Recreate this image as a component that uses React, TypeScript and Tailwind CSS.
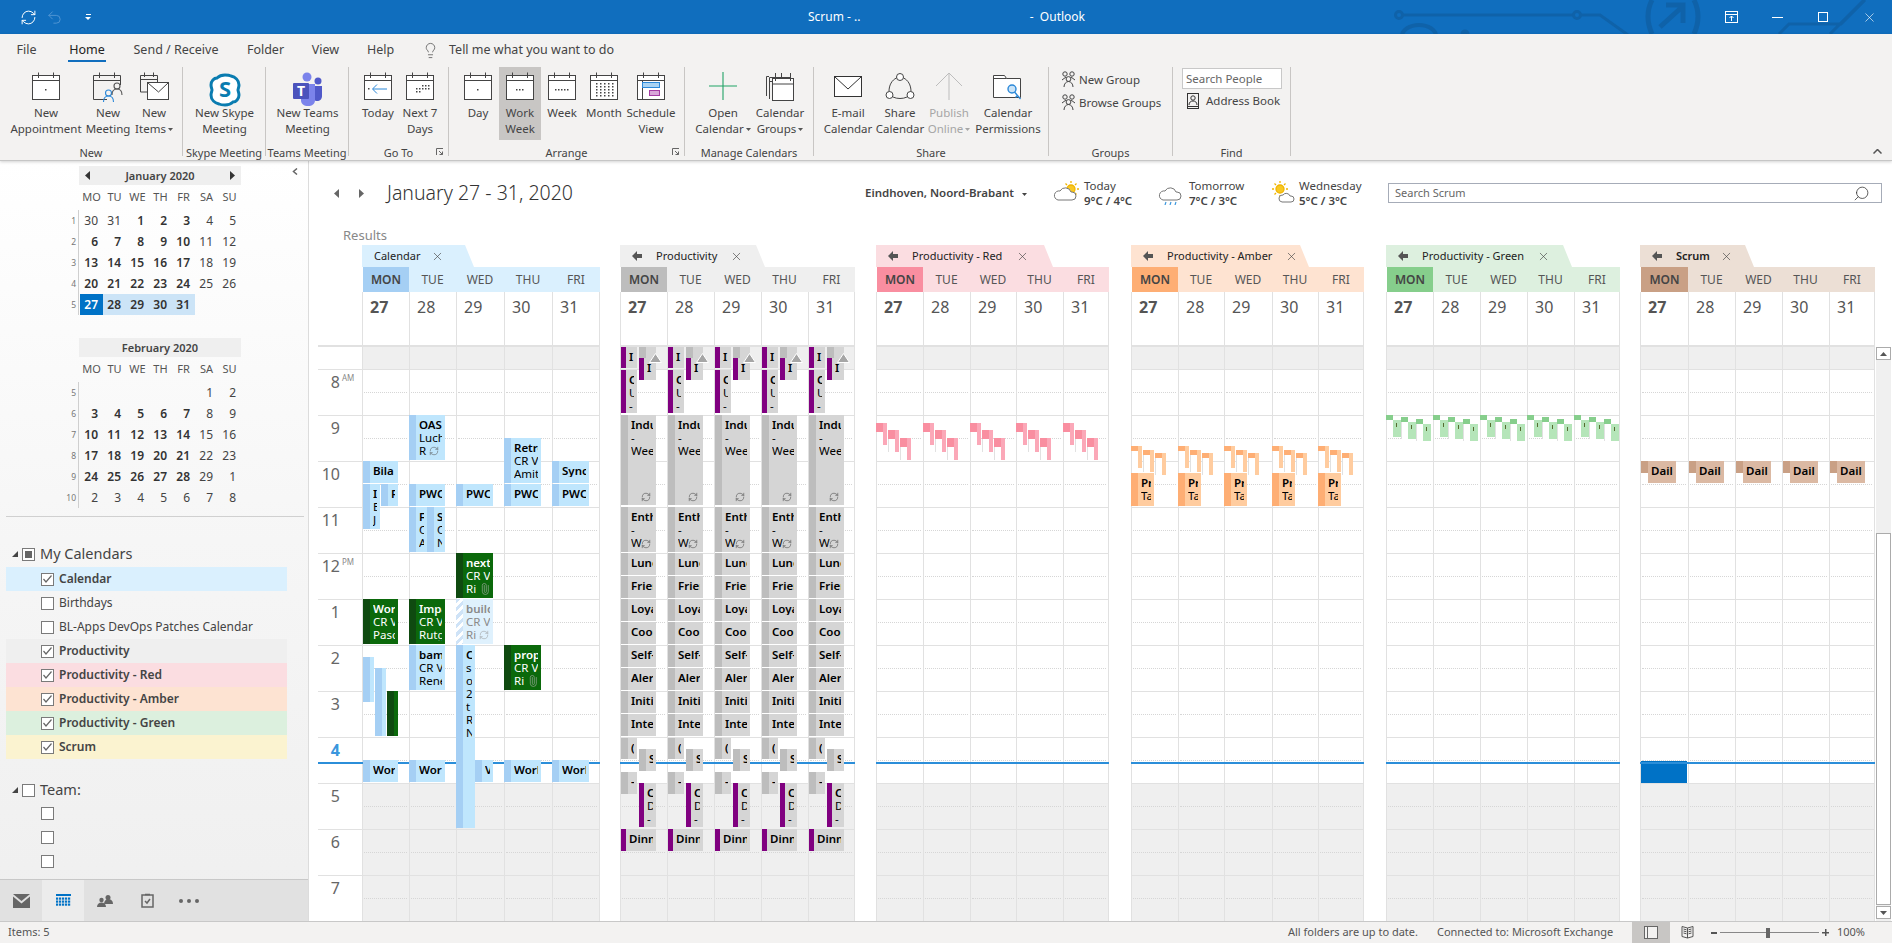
import type { ReactNode } from "react";
import { Paperclip, RefreshCw, Undo2, X, Search, Lightbulb } from "lucide-react";

// ---------- small drawings ----------

function Tri({ className = "fill-[#555]" }: { className?: string }) {
  return (
    <svg width="5" height="3" viewBox="0 0 5 3" className={"inline-block ml-[2px] align-middle " + className}>
      <polygon points="0,0 5,0 2.5,3" />
    </svg>
  );
}

function Cal({ children }: { children?: ReactNode }) {
  return (
    <svg width="28" height="28" viewBox="0 0 28 28" fill="none">
      <rect x="0.5" y="3.5" width="27" height="24" fill="#fff" stroke="#444" />
      <path d="M0 8.5H28M6.5 0.5V6M21.5 0.5V6" stroke="#444" />
      {children}
    </svg>
  );
}

const dots = (pts: number[][], fill = "#444") =>
  pts.map(([x, y]) => <rect key={x + "-" + y} x={x} y={y} width="1.5" height="1.5" fill={fill} />);

function Person({ x, y, color }: { x: number; y: number; color: string }) {
  return (
    <g fill="none" stroke={color} strokeWidth="1.1">
      <circle cx={x} cy={y} r="3" />
      <path d={`M${x - 5} ${y + 9}c0-4 2-6 5-6s5 2 5 6`} />
    </g>
  );
}

function SkypeIcon() {
  return (
    <svg width="34" height="36" viewBox="0 0 34 36">
      <path
        d="M17 3c-4 0-6 1-8 3-3 0-6 3-6 7 0 2 1 4 1 5 0 1-1 3-1 5 0 5 4 8 8 9 2 1 4 1 6 1 4 0 6-1 8-3 3 0 6-3 6-7 0-2-1-4-1-5 0-1 1-3 1-5 0-5-4-8-8-9-2-1-4-1-6-1z"
        fill="#fff"
        stroke="#0a7cb0"
        strokeWidth="3"
      />
      <text x="17" y="25" textAnchor="middle" fontSize="22" fontWeight="700" fill="#0a7cb0" fontFamily="Noto Sans">
        S
      </text>
    </svg>
  );
}

function TeamsIcon() {
  return (
    <svg width="30" height="36" viewBox="0 0 30 36">
      <circle cx="14" cy="5" r="4.5" fill="#7b83eb" />
      <circle cx="25" cy="9" r="3.5" fill="#5059c9" />
      <path d="M8 12h14v16c0 4-3 6-7 6s-7-2-7-6z" fill="#7b83eb" />
      <path d="M22 14h7v10c0 3-2 5-5 5-1 0-2 0-2-1z" fill="#5059c9" />
      <rect x="0" y="11" width="16" height="16" rx="1" fill="#4b53bc" />
      <text x="8" y="24" textAnchor="middle" fontSize="14" fontWeight="700" fill="#fff" fontFamily="Noto Sans">
        T
      </text>
    </svg>
  );
}

function Envelope() {
  return (
    <svg width="28" height="24" viewBox="0 0 28 24" fill="none">
      <rect x="0.5" y="2.5" width="27" height="20" fill="#fff" stroke="#333" />
      <path d="M1 3l13 12L27 3" stroke="#333" />
    </svg>
  );
}

function GroupsGlyph() {
  return (
    <svg width="15" height="17" viewBox="0 0 15 17" fill="none" stroke="#444">
      <circle cx="4" cy="3" r="2.2" />
      <circle cx="11" cy="3" r="2.2" />
      <circle cx="7.5" cy="8" r="2.4" />
      <path d="M1 9l4-3M14 9l-4-3M3 16c0-3 2-5.5 4.5-5.5S12 13 12 16" />
    </svg>
  );
}

function Weather({ kind }: { kind: "sun" | "rain" | "bright" }) {
  return (
    <svg width="28" height="24" viewBox="0 0 28 24" fill="none">
      {kind !== "rain" && (
        <g stroke="#f0b400" strokeWidth="1.3">
          <circle cx={kind === "sun" ? 18 : 12} cy="8" r="4" fill="#f8c822" />
          <path
            d={
              kind === "sun"
                ? "M18 0v2M18 14v2M10 8h2M24 8h2M12.500 2.500l1.500 1.500M23.500 2.500l-1.500 1.500M23.500 13.500l-1.500-1.500"
                : "M12 0v2M12 14v2M4 8h2M18 8h2M6.500 2.500l1.500 1.500M17.500 2.500l-1.500 1.500M6.500 13.500l1.500-1.500"
            }
          />
        </g>
      )}
      <path
        d={
          kind === "bright"
            ? "M14 21h9a3 3 0 000-6h-1a4 4 0 00-7-1 3.500 3.500 0 00-1 7z"
            : "M5 19h14a4 4 0 000-8h-1a6 6 0 00-11-1 4.500 4.500 0 00-2 9z"
        }
        fill="#fff"
        stroke="#777"
      />
      {kind === "rain" && <path d="M8 21l-1 3M13 21l-1 3M18 21l-1 3" stroke="#3a96dd" strokeWidth="1.200" />}
    </svg>
  );
}

function BackArrow() {
  return (
    <svg width="10" height="10" viewBox="0 0 10 10" className="fill-[#555] shrink-0 mr-[14px]">
      <polygon points="0,5 5,0 5,3 10,3 10,7 5,7 5,10" />
    </svg>
  );
}

function Caret({ dir, className = "fill-[#444]" }: { dir: "l" | "r"; className?: string }) {
  return (
    <svg width="5" height="9" viewBox="0 0 5 9" className={className}>
      <polygon points={dir === "l" ? "5,0 5,9 0,4.500" : "0,0 0,9 5,4.500"} />
    </svg>
  );
}

function Check({ on, mixed }: { on?: boolean; mixed?: boolean }) {
  return (
    <span className="flex items-center justify-center shrink-0 bg-white border border-[#7a7a7a] w-[13px] h-[13px]">
      {on && (
        <svg width="9" height="8" viewBox="0 0 9 8" fill="none" stroke="#666" strokeWidth="1.200">
          <path d="M0.500 4l2.500 3L8.500 0.500" />
        </svg>
      )}
      {mixed && <span className="w-[7px] h-[7px] bg-[#666]" />}
    </span>
  );
}

// ---------- title bar ----------

function TitleBar() {
  return (
    <div className="relative h-[34px] shrink-0 bg-[#106ebe] text-white flex items-center overflow-hidden">
      <svg className="absolute left-[1390px] top-0" width="502" height="34" viewBox="0 0 502 34" fill="none" stroke="#0f62a9" strokeWidth="3">
        <circle cx="9" cy="15" r="3.500" />
        <path d="M13 15H183" />
        <circle cx="187" cy="15" r="3.500" />
        <path d="M191 15h19l28 20" />
        <path d="M12 36a17 11 0 0 1 34 0" strokeWidth="4" />
        <circle cx="75" cy="34" r="3" fill="#0f62a9" />
        <path d="M262 0q-8 16 0 34M304 0q8 16 0 34" strokeWidth="5" />
        <path d="M270 27l22-20M276 5h17v18" strokeWidth="5" />
        <path d="M389 34l10-10h52l24-24M440 34l34-34" />
      </svg>
      <div className="relative flex items-center pl-[20px]">
        <RefreshCw size={17} strokeWidth={1.4} />
        <Undo2 size={17} strokeWidth={1.4} className="ml-[9px] text-[#4f94d2]" />
        <span className="ml-[22px] flex flex-col items-center gap-[2px]">
          <span className="w-[5px] h-[1px] bg-white" />
          <svg width="6" height="3" viewBox="0 0 6 3" className="fill-white">
            <polygon points="0,0 6,0 3,3" />
          </svg>
        </span>
      </div>
      <div className="relative ml-[717px] w-[277px] flex justify-between text-[12px]">
        <span>Scrum - ..</span>
        <span>-&nbsp; Outlook</span>
      </div>
      <div className="relative ml-auto flex items-center">
        <span className="w-[46px] flex justify-center">
          <svg width="13" height="12" viewBox="0 0 13 12" fill="none" stroke="#fff">
            <rect x="0.500" y="0.500" width="12" height="11" />
            <path d="M0 3.500h13M6.500 10V5M4.500 7l2-2 2 2" />
          </svg>
        </span>
        <span className="w-[46px] flex justify-center">
          <span className="w-[11px] h-[1px] bg-white" />
        </span>
        <span className="w-[46px] flex justify-center">
          <span className="w-[10px] h-[10px] border border-white" />
        </span>
        <span className="w-[46px] flex justify-center">
          <X size={15} strokeWidth={1} />
        </span>
      </div>
    </div>
  );
}

// ---------- ribbon ----------

function RibbonButton({
  w,
  icon,
  lines,
  arrow,
  active,
  muted,
}: {
  w: string;
  icon: ReactNode;
  lines: string[];
  arrow?: boolean;
  active?: boolean;
  muted?: boolean;
}) {
  return (
    <div className={"h-[73px] shrink-0 flex flex-col items-center " + w + (active ? " bg-[#c8c6c4]" : "") + (muted ? " text-[#a6a6a6]" : "")}>
      <div className="h-[38px] pt-[5px] flex justify-center items-start">{icon}</div>
      {lines.map((l, i) => (
        <div key={l} className="h-[16px] leading-[16px] whitespace-nowrap">
          {l}
          {arrow && i === lines.length - 1 && <Tri className={muted ? "fill-[#a6a6a6]" : "fill-[#555]"} />}
        </div>
      ))}
    </div>
  );
}

function RibbonGroup({
  w,
  label,
  launcher,
  pad = "",
  children,
}: {
  w: string;
  label: string;
  launcher?: boolean;
  pad?: string;
  children: ReactNode;
}) {
  return (
    <div className={"relative h-[89px] border-r border-[#c8c6c4] shrink-0 " + w}>
      <div className={"flex h-[73px] " + pad}>{children}</div>
      <div className="mt-[5px] h-[16px] leading-[16px] text-[11px] text-center whitespace-nowrap">{label}</div>
      {launcher && (
        <svg width="7" height="7" viewBox="0 0 7 7" fill="none" stroke="#666" className="absolute right-[5px] bottom-[1px]">
          <path d="M0.500 7V0.500H7M3 3l3.500 3.500M6.500 3.500v3h-3" />
        </svg>
      )}
    </div>
  );
}

const TABS = [
  ["File", "w-[53px]"],
  ["Home", "w-[68px]"],
  ["Send / Receive", "w-[110px]"],
  ["Folder", "w-[69px]"],
  ["View", "w-[51px]"],
  ["Help", "w-[59px]"],
];

function Ribbon() {
  return (
    <div className="relative z-10 h-[127px] shrink-0 bg-[#f3f2f1] border-b border-[#c6c6c6] shadow-[0_1px_3px_rgba(0,0,0,0.18)] text-[11.500px] text-[#444]">
      <div className="flex h-[28px] items-center pt-[4px] text-[12.500px]">
        {TABS.map(([t, w]) => (
          <div key={t} className={"relative h-full flex items-center justify-center " + w}>
            <span className={t === "Home" ? "text-[#222]" : ""}>{t}</span>
            {t === "Home" && <span className="absolute bottom-0 left-[15px] w-[38px] h-[2px] bg-[#106ebe]" />}
          </div>
        ))}
        <Lightbulb size={17} strokeWidth={1.1} className="ml-[12px] text-[#555]" />
        <span className="ml-[10px]">Tell me what you want to do</span>
      </div>
      <div className="flex mt-[5px]">
        <RibbonGroup w="w-[183px]" label="New" pad="pl-[7px]">
          <RibbonButton w="w-[78px]" icon={<Cal>{dots([[13, 17]])}</Cal>} lines={["New", "Appointment"]} />
          <RibbonButton
            w="w-[46px]"
            icon={
              <svg width="30" height="30" viewBox="0 0 30 30" fill="none">
                <path d="M14 27.500H0.500V3.500h27V13M0 8.500h28M6.500 0.500V6M21.500 0.500V6" stroke="#444" />
                <Person x={15.500} y={21} color="#2b88d8" />
                <Person x={24} y={14} color="#555" />
              </svg>
            }
            lines={["New", "Meeting"]}
          />
          <RibbonButton
            w="w-[46px]"
            icon={
              <svg width="29" height="30" viewBox="0 0 29 30" fill="none" stroke="#444">
                <path d="M7 20H0.500V3.500h17V10M0 7.500h18M4.500 0.500V5M13.500 0.500V5" />
                <rect x="7.500" y="10.500" width="21" height="17" fill="#fff" />
                <path d="M8 11l10.500 9L28 11" />
              </svg>
            }
            lines={["New", "Items"]}
            arrow
          />
        </RibbonGroup>
        <RibbonGroup w="w-[83px]" label="Skype Meeting">
          <RibbonButton w="w-[83px]" icon={<SkypeIcon />} lines={["New Skype", "Meeting"]} />
        </RibbonGroup>
        <RibbonGroup w="w-[83px]" label="Teams Meeting">
          <RibbonButton w="w-[83px]" icon={<TeamsIcon />} lines={["New Teams", "Meeting"]} />
        </RibbonGroup>
        <RibbonGroup w="w-[100px]" label="Go To" pad="pl-[8px]" launcher>
          <RibbonButton
            w="w-[42px]"
            icon={
              <Cal>
                <path d="M23 17H9M13 12.500L8.500 17l4.500 4.500" stroke="#2b88d8" />
                <rect x="4" y="16" width="1.500" height="1.500" fill="#444" />
              </Cal>
            }
            lines={["Today"]}
          />
          <RibbonButton
            w="w-[42px]"
            icon={<Cal>{dots([[16, 13], [19, 13], [22, 13], [10, 16], [13, 16], [16, 16], [19, 16], [22, 16], [10, 19], [13, 19]])}</Cal>}
            lines={["Next 7", "Days"]}
          />
        </RibbonGroup>
        <RibbonGroup w="w-[236px]" label="Arrange" pad="pl-[8px]" launcher>
          <RibbonButton w="w-[42px]" icon={<Cal>{dots([[13, 17]])}</Cal>} lines={["Day"]} />
          <RibbonButton active w="w-[42px]" icon={<Cal>{dots([[10, 17], [13, 17], [16, 17]])}</Cal>} lines={["Work", "Week"]} />
          <RibbonButton w="w-[42px]" icon={<Cal>{dots([[7, 17], [10, 17], [13, 17], [16, 17], [19, 17]])}</Cal>} lines={["Week"]} />
          <RibbonButton
            w="w-[42px]"
            icon={
              <Cal>
                {dots(
                  [11, 14, 17, 20, 23].flatMap((y) => [6, 10, 14, 18, 22].map((x) => [x, y]))
                )}
              </Cal>
            }
            lines={["Month"]}
          />
          <RibbonButton
            w="w-[52px]"
            icon={
              <Cal>
                <path d="M5.500 8.500V27.500" stroke="#444" />
                <rect x="5.500" y="10.500" width="17" height="5" fill="#a9d3f2" stroke="#2b88d8" />
                <rect x="12.500" y="18.500" width="10" height="5" fill="#d8a6d8" stroke="#a33ba3" />
              </Cal>
            }
            lines={["Schedule", "View"]}
          />
        </RibbonGroup>
        <RibbonGroup w="w-[129px]" label="Manage Calendars" pad="pl-[11px]">
          <RibbonButton
            w="w-[54px]"
            icon={
              <svg width="28" height="28" viewBox="0 0 28 28" stroke="#21a366" strokeWidth="1.100">
                <path d="M14 0V28M0 14H28" />
              </svg>
            }
            lines={["Open", "Calendar"]}
            arrow
          />
          <RibbonButton
            w="w-[60px]"
            icon={
              <svg width="28" height="29" viewBox="0 0 28 29" fill="none" stroke="#444">
                <path d="M0.500 24V4.500H3M3.500 27V5.500h21M3 9.500h3" />
                <rect x="6.500" y="6.500" width="21" height="22" fill="#fff" />
                <path d="M6 12h22M9.500 1v8M15.500 1v6M24.500 1v8" />
              </svg>
            }
            lines={["Calendar", "Groups"]}
            arrow
          />
        </RibbonGroup>
        <RibbonGroup w="w-[235px]" label="Share" pad="pl-[8px]">
          <RibbonButton w="w-[52px]" icon={<div className="pt-[2px]"><Envelope /></div>} lines={["E-mail", "Calendar"]} />
          <RibbonButton
            w="w-[52px]"
            icon={
              <svg width="30" height="30" viewBox="0 0 30 30" fill="none" stroke="#444">
                <circle cx="15" cy="5" r="3.500" fill="#fff" />
                <circle cx="4.500" cy="23" r="3.500" fill="#fff" />
                <circle cx="25.500" cy="23" r="3.500" fill="#fff" />
                <path d="M11.500 6C7 8 4 13 4 19.500M18.500 6c4.500 2 7.500 7 7.500 13.500M8 25c4 2 10 2 14 0" />
              </svg>
            }
            lines={["Share", "Calendar"]}
          />
          <RibbonButton
            muted
            w="w-[46px]"
            icon={
              <svg width="28" height="29" viewBox="0 0 28 29" fill="none" stroke="#bdbdbd">
                <path d="M14 28V1M1 14L14 1l13 13" />
              </svg>
            }
            lines={["Publish", "Online"]}
            arrow
          />
          <RibbonButton
            w="w-[72px]"
            icon={
              <svg width="30" height="30" viewBox="0 0 30 30" fill="none">
                <path d="M0.500 25.500V3.500h11l2 3h14v19z" fill="#fff" stroke="#444" />
                <path d="M0.500 6.500h13" stroke="#444" />
                <circle cx="19" cy="17" r="4" stroke="#2b88d8" strokeWidth="1.400" fill="#cbe4f7" />
                <path d="M21.500 20l6 7M24.500 23.500l-2 2" stroke="#2b88d8" strokeWidth="1.400" />
              </svg>
            }
            lines={["Calendar", "Permissions"]}
          />
        </RibbonGroup>
        <RibbonGroup w="w-[124px]" label="Groups">
          <div className="pl-[12px] pt-[1px]">
            <div className="h-[23px] flex items-center gap-[3px] whitespace-nowrap">
              <GroupsGlyph />
              <span>New Group</span>
            </div>
            <div className="h-[23px] flex items-center gap-[3px] whitespace-nowrap">
              <GroupsGlyph />
              <span>Browse Groups</span>
            </div>
          </div>
        </RibbonGroup>
        <RibbonGroup w="w-[118px]" label="Find">
          <div className="pl-[9px] pt-[1px]">
            <div className="w-[100px] h-[21px] leading-[19px] border border-[#c8c8c8] bg-white pl-[3px] text-[#666] whitespace-nowrap">
              Search People
            </div>
            <div className="mt-[2px] h-[20px] flex items-center gap-[7px] pl-[5px] whitespace-nowrap">
              <svg width="12" height="16" viewBox="0 0 12 16" fill="none" stroke="#333">
                <rect x="0.500" y="0.500" width="11" height="15" />
                <circle cx="6" cy="5" r="2.200" />
                <path d="M2 12c0-3 2-4 4-4s4 1 4 4M0 13.500h12" />
              </svg>
              <span>Address Book</span>
            </div>
          </div>
        </RibbonGroup>
      </div>
      <svg width="9" height="5" viewBox="0 0 9 5" fill="none" stroke="#555" strokeWidth="1.500" className="absolute left-[1873px] top-[115px]">
        <path d="M0.500 4.500l4-4 4 4" />
      </svg>
    </div>
  );
}

// ---------- sidebar ----------

const WEEKDAYS = ["MO", "TU", "WE", "TH", "FR", "SA", "SU"];

// negative numbers are days that fall in another month, 0 is an empty cell
const JAN = [
  [1, [-30, -31, 1, 2, 3, 4, 5]],
  [2, [6, 7, 8, 9, 10, 11, 12]],
  [3, [13, 14, 15, 16, 17, 18, 19]],
  [4, [20, 21, 22, 23, 24, 25, 26]],
  [5, [27, 28, 29, 30, 31, 0, 0]],
] as [number, number[]][];

const FEB = [
  [5, [0, 0, 0, 0, 0, 1, 2]],
  [6, [3, 4, 5, 6, 7, 8, 9]],
  [7, [10, 11, 12, 13, 14, 15, 16]],
  [8, [17, 18, 19, 20, 21, 22, 23]],
  [9, [24, 25, 26, 27, 28, 29, -1]],
  [10, [-2, -3, -4, -5, -6, -7, -8]],
] as [number, number[]][];

function MiniMonth({ title, rows, arrows, selected }: { title: string; rows: [number, number[]][]; arrows?: boolean; selected?: boolean }) {
  return (
    <div className="text-[12px] text-[#444]">
      <div className="ml-[79px] w-[162px] h-[19px] bg-[#efefef] flex items-center justify-between px-[6px]">
        <span>{arrows && <Caret dir="l" className="fill-[#333]" />}</span>
        <span className="text-[11px] font-semibold leading-none">{title}</span>
        <span>{arrows && <Caret dir="r" className="fill-[#333]" />}</span>
      </div>
      <div className="ml-[80px] h-[25px] flex items-center">
        {WEEKDAYS.map((d) => (
          <span key={d} className="w-[23px] text-center text-[11px] text-[#555]">
            {d}
          </span>
        ))}
      </div>
      {rows.map(([wk, days], r) => (
        <div key={wk} className="flex h-[21px]">
          <span className="ml-[59px] w-[20px] pr-[2px] text-right text-[8.500px] leading-[21px] text-[#777] border-r border-[#cfcfcf]">{wk}</span>
          <span className="w-[1px]" />
          {days.map((n, i) => {
            const isToday = selected && r === 4 && i === 0;
            const inWeek = selected && r === 4 && i < 5;
            return (
              <span
                key={i}
                className={
                  "w-[23px] pr-[5px] text-right leading-[21px] " +
                  (n > 0 && i < 5 ? "font-semibold text-[#333] " : "") +
                  (isToday ? "bg-[#0072c6] text-white " : inWeek ? "bg-[#cce4f7] " : "")
                }
              >
                {n === 0 ? "" : Math.abs(n)}
              </span>
            );
          })}
        </div>
      ))}
    </div>
  );
}

const CALENDARS = [
  { name: "Calendar", bg: "bg-[#daf0fe]", on: true },
  { name: "Birthdays", bg: "" },
  { name: "BL-Apps DevOps Patches Calendar", bg: "" },
  { name: "Productivity", bg: "bg-[#efefef]", on: true },
  { name: "Productivity - Red", bg: "bg-[#fbdde1]", on: true },
  { name: "Productivity - Amber", bg: "bg-[#fde3d2]", on: true },
  { name: "Productivity - Green", bg: "bg-[#dcf0de]", on: true },
  { name: "Scrum", bg: "bg-[#fbf3d0]", on: true },
];

function Heading({ label, mixed }: { label: string; mixed?: boolean }) {
  return (
    <div className="h-[24px] flex items-center pl-[12px] text-[14.500px] text-[#444]">
      <svg width="6" height="6" viewBox="0 0 6 6" className="fill-[#444] mr-[4px]">
        <polygon points="6,0 6,6 0,6" />
      </svg>
      <Check mixed={mixed} />
      <span className="ml-[5px]">{label}</span>
    </div>
  );
}

function NavBar() {
  return (
    <div className="mt-auto h-[42px] shrink-0 bg-[#e1e1e1] border-t border-[#c8c8c8] flex">
      <div className="w-[42px] flex items-center justify-center">
        <svg width="17" height="14" viewBox="0 0 17 14" fill="#666">
          <polygon points="0,0 17,0 8.500,7" />
          <polygon points="0,2.500 8.500,9.500 17,2.500 17,14 0,14" />
        </svg>
      </div>
      <div className="w-[42px] bg-[#ececec] flex items-center justify-center">
        <svg width="15" height="13" viewBox="0 0 15 13" fill="#0072c6">
          <rect width="15" height="2" />
          {[3, 6, 9].flatMap((y) =>
            [0, 3, 6, 9, 12].map((x) => <rect key={x + "-" + y} x={x} y={y + 0.5} width="2.200" height="2.200" />)
          )}
        </svg>
      </div>
      <div className="w-[42px] flex items-center justify-center">
        <svg width="16" height="12" viewBox="0 0 16 12" fill="#666">
          <circle cx="11" cy="2.500" r="2.500" />
          <path d="M7 9c0-3 2-5 4-5s5 1 5 5z" />
          <circle cx="4.500" cy="5" r="2.200" />
          <path d="M0 12c0-3 2-4.500 4.500-4.500S9 9 9 12z" />
        </svg>
      </div>
      <div className="w-[42px] flex items-center justify-center">
        <svg width="13" height="15" viewBox="0 0 13 15" fill="none" stroke="#666" strokeWidth="1.500">
          <rect x="1" y="2" width="11" height="12" />
          <path d="M4 1.500h5M4 8l2 2 3-4" />
        </svg>
      </div>
      <div className="w-[42px] flex items-center justify-center gap-[4px]">
        <span className="w-[4px] h-[4px] rounded-full bg-[#666]" />
        <span className="w-[4px] h-[4px] rounded-full bg-[#666]" />
        <span className="w-[4px] h-[4px] rounded-full bg-[#666]" />
      </div>
    </div>
  );
}

function Sidebar() {
  return (
    <aside className="relative w-[309px] shrink-0 h-full flex flex-col border-r border-[#dcdcdc] bg-gradient-to-b from-white via-[#f6f6f6] to-[#efefef]">
      <div className="absolute left-[292px] top-[7px]">
        <svg width="6" height="7" viewBox="0 0 6 7" fill="none" stroke="#666" strokeWidth="1.500">
          <path d="M5 0.500L1.500 3.500 5 6.500" />
        </svg>
      </div>
      <div className="pt-[5px]">
        <MiniMonth title="January 2020" rows={JAN} arrows selected />
      </div>
      <div className="mt-[23px]">
        <MiniMonth title="February 2020" rows={FEB} />
      </div>
      <div className="mt-[8px] ml-[6px] w-[298px] h-[1px] bg-[#d0d0d0]" />
      <div className="mt-[25px]">
        <Heading label="My Calendars" mixed />
      </div>
      <div className="mt-[1px]">
        {CALENDARS.map((c) => (
          <div key={c.name} className={"ml-[6px] w-[281px] h-[24px] flex items-center pl-[35px] text-[12px] text-[#444] " + c.bg}>
            <Check on={c.on} />
            <span className={"ml-[5px] " + (c.on ? "font-semibold" : "")}>{c.name}</span>
          </div>
        ))}
      </div>
      <div className="mt-[19px]">
        <Heading label="Team:" />
      </div>
      <div className="-mt-[1px]">
        {[0, 1, 2].map((i) => (
          <div key={i} className="h-[24px] flex items-center pl-[41px]">
            <Check />
          </div>
        ))}
      </div>
      <NavBar />
    </aside>
  );
}

// ---------- calendar events ----------

type Ev = {
  x: number;
  w: number;
  t: number;
  b: number;
  k: string;
  lines?: string[];
  ic?: "sync" | "clip" | "off";
  corner?: boolean;
  flat?: boolean; // stripe only covers the top of the box, as in the Scrum dailies
};

const KINDS: Record<string, { bg: string; stripe: string; text: string }> = {
  blue: { bg: "bg-[#bfe6fd]", stripe: "bg-[#a5cff4]", text: "text-black" },
  green: { bg: "bg-[#0b690b]", stripe: "bg-[#0f4a10]", text: "text-white" },
  tent: {
    bg: "bg-[#dff1fd]",
    stripe: "bg-[repeating-linear-gradient(135deg,#cfe3f7_0,#cfe3f7_3px,#fff_3px,#fff_6px)]",
    text: "text-[#8a8a8a]",
  },
  gray: { bg: "bg-[#d5d5d5]", stripe: "bg-[#bdbdbd]", text: "text-black" },
  purple: { bg: "bg-[#d5d5d5]", stripe: "bg-[#800080]", text: "text-black" },
  amber: { bg: "bg-[#ffcc9f]", stripe: "bg-[#feae74]", text: "text-black" },
  scrum: { bg: "bg-[#dbb9a3]", stripe: "bg-[#c9a085]", text: "text-black" },
};

function EventBox({ e }: { e: Ev }) {
  const k = KINDS[e.k];
  const thin = e.k === "purple";
  return (
    <div
      className={"absolute flex overflow-hidden " + (e.flat ? "" : k.bg + " ") + k.text}
      style={{ left: e.x, top: e.t - 369, width: e.w, height: e.b - e.t }}
    >
      {e.flat ? (
        <div className="w-[7px] shrink-0 bg-white">
          <div className={"h-[12px] " + k.stripe} />
        </div>
      ) : (
        <div className={"shrink-0 " + (thin ? "w-[5px] " : "w-[7px] ") + k.stripe} />
      )}
      <div className={"min-w-0 flex-1 overflow-hidden whitespace-nowrap pl-[3px] pt-[3px] text-[11.500px] leading-[13px] " + (e.flat ? k.bg : "")}>
        <div className="overflow-hidden mr-[3px]">
          {(e.lines || []).map((l, i) => (
            <div key={i} className={"h-[13px] flex items-center " + (i === 0 ? "font-semibold" : "")}>
              {l}
              {e.ic && !e.corner && i === (e.lines || []).length - 1 && (
                <span className="ml-[3px] shrink-0">
                  {e.ic === "sync" && <RefreshCw size={10} strokeWidth={1.300} className="text-[#555]" />}
                  {e.ic === "clip" && <Paperclip size={12} strokeWidth={1.300} className="text-[#9aa89a] -rotate-45" />}
                  {e.ic === "off" && <RefreshCw size={10} strokeWidth={1.300} className="text-[#9a9a9a]" />}
                </span>
              )}
            </div>
          ))}
        </div>
      </div>
      {e.corner && <RefreshCw size={10} strokeWidth={1.300} className="absolute right-[5px] bottom-[3px] text-[#444]" />}
    </div>
  );
}

function Sliver({
  x,
  t,
  b,
  dark,
  light,
  top,
  w = 11,
  tick,
  lightTop = "",
}: {
  x: number;
  t: number;
  b: number;
  dark: string;
  light: string;
  top: string;
  w?: number;
  tick?: boolean;
  lightTop?: string;
}) {
  return (
    <div className="absolute flex" style={{ left: x, top: t - 369, width: w, height: b - t }}>
      <div className="w-[7px] flex flex-col">
        <div className={top + " " + dark} />
        <div className="flex-1 border-l border-[#e1e1e1] bg-white" />
      </div>
      <div className={"flex-1 " + lightTop + " " + light}>{tick && <div className="mt-[3px] ml-[3px] w-[1px] h-[4px] bg-[#556b2f]" />}</div>
    </div>
  );
}

// the five Productivity days all hold the same events
const PROD_EVENTS: Ev[] = [
  { x: 1, w: 16, t: 347, b: 368, k: "purple", lines: ["I"] },
  { x: 19, w: 17, t: 347, b: 358, k: "gray" },
  { x: 19, w: 17, t: 358, b: 380, k: "purple", lines: ["I"] },
  { x: 1, w: 16, t: 370, b: 413, k: "purple", lines: ["C", "U", "-"] },
  { x: 1, w: 35, t: 415, b: 505, k: "gray", lines: ["Indu", "-", "Weekly"], corner: true, ic: "sync" },
  { x: 1, w: 35, t: 507, b: 552, k: "gray", lines: ["Enth", "-", "W"], corner: true, ic: "sync" },
  { x: 1, w: 35, t: 553, b: 575, k: "gray", lines: ["Lunch"] },
  { x: 1, w: 35, t: 576, b: 598, k: "gray", lines: ["Friends"] },
  { x: 1, w: 35, t: 599, b: 621, k: "gray", lines: ["Loyalty"] },
  { x: 1, w: 35, t: 622, b: 644, k: "gray", lines: ["Coop"] },
  { x: 1, w: 35, t: 645, b: 667, k: "gray", lines: ["Self-"] },
  { x: 1, w: 35, t: 668, b: 690, k: "gray", lines: ["Alert"] },
  { x: 1, w: 35, t: 691, b: 713, k: "gray", lines: ["Initial"] },
  { x: 1, w: 35, t: 714, b: 736, k: "gray", lines: ["Inter"] },
  { x: 1, w: 16, t: 738, b: 759, k: "gray", lines: ["("] },
  { x: 19, w: 17, t: 749, b: 771, k: "gray", lines: ["S"] },
  { x: 1, w: 16, t: 772, b: 794, k: "gray", lines: ["-"] },
  { x: 19, w: 17, t: 783, b: 827, k: "purple", lines: ["C", "D", "-"] },
  { x: 1, w: 35, t: 829, b: 851, k: "purple", lines: ["Dinner"] },
];

const WORK_BOTTOM: Ev = { x: 0, w: 36, t: 760, b: 782, k: "blue", lines: ["Work"] };

const CALENDAR_EVENTS: Ev[][] = [
  [
    { x: 1, w: 35, t: 461, b: 483, k: "blue", lines: ["Bila"] },
    { x: 1, w: 17, t: 484, b: 529, k: "blue", lines: ["I", "E", "J"] },
    { x: 19, w: 17, t: 484, b: 506, k: "blue", lines: ["F"] },
    { x: 1, w: 11, t: 657, b: 702, k: "blue" },
    { x: 13, w: 11, t: 668, b: 736, k: "blue" },
    { x: 25, w: 11, t: 691, b: 736, k: "green" },
    { x: 1, w: 35, t: 599, b: 644, k: "green", lines: ["Work", "CR V", "Pasc"] },
    { ...WORK_BOTTOM, x: 1, w: 35 },
  ],
  [
    { x: 0, w: 36, t: 415, b: 460, k: "blue", lines: ["OAS", "Luch", "R"], ic: "sync" },
    { x: 0, w: 36, t: 484, b: 506, k: "blue", lines: ["PWC"] },
    { x: 0, w: 18, t: 507, b: 552, k: "blue", lines: ["F", "C", "A"] },
    { x: 18, w: 18, t: 507, b: 552, k: "blue", lines: ["S", "C", "N"] },
    { x: 0, w: 36, t: 599, b: 644, k: "green", lines: ["Impa", "CR V", "Rutg"] },
    { x: 0, w: 36, t: 645, b: 690, k: "blue", lines: ["bam", "CR V", "Rene"] },
    WORK_BOTTOM,
  ],
  [
    { x: 0, w: 37, t: 484, b: 506, k: "blue", lines: ["PWC"] },
    { x: 0, w: 37, t: 553, b: 598, k: "green", lines: ["next", "CR V", "Ri"], ic: "clip" },
    { x: 0, w: 37, t: 599, b: 644, k: "tent", lines: ["build", "CR V", "Ri"], ic: "off" },
    { x: 0, w: 19, t: 645, b: 828, k: "blue", lines: ["C", "s", "o", "2", "t", "R", "N"] },
    { x: 19, w: 18, t: 760, b: 782, k: "blue", lines: ["V"] },
  ],
  [
    { x: 0, w: 37, t: 438, b: 483, k: "blue", lines: ["Retro", "CR V", "Amit"] },
    { x: 0, w: 37, t: 484, b: 506, k: "blue", lines: ["PWC"] },
    { x: 0, w: 37, t: 645, b: 690, k: "green", lines: ["prop", "CR V", "Ri"], ic: "clip" },
    { ...WORK_BOTTOM, w: 37 },
  ],
  [
    { x: 0, w: 37, t: 461, b: 483, k: "blue", lines: ["Sync"] },
    { x: 0, w: 37, t: 484, b: 506, k: "blue", lines: ["PWC"] },
    { ...WORK_BOTTOM, w: 37 },
  ],
];

function ProdExtras() {
  return (
    <svg width="13" height="10" viewBox="0 0 13 10" className="absolute left-[29px] -top-[16px]">
      <polygon points="6.500,0.500 12.500,9.500 0.500,9.500" fill="#a6a6a6" stroke="#fff" />
    </svg>
  );
}

function RedDay() {
  const c = { dark: "bg-[#f98ea0]", light: "bg-[#fba8b8]", top: "h-[9px]" };
  return (
    <>
      <Sliver x={0} t={423} b={445} {...c} />
      <Sliver x={12} t={430} b={452} {...c} />
      <Sliver x={24} t={438} b={460} {...c} />
    </>
  );
}

function AmberDay() {
  const c = { dark: "bg-[#feae74]", light: "bg-[#ffcc9f]", top: "h-[5px]" };
  return (
    <>
      <Sliver x={0} t={446} b={468} {...c} />
      <Sliver x={12} t={450} b={472} {...c} />
      <Sliver x={24} t={453} b={475} {...c} />
      <EventBox e={{ x: 0, w: 23, t: 473, b: 506, k: "amber", lines: ["Pr", "Ta"] }} />
    </>
  );
}

function GreenDay() {
  const c = { dark: "bg-[#86ce8c]", light: "bg-[#b5e5b9]", top: "h-[5px]", w: 15, tick: true, lightTop: "mt-[5px]" };
  return (
    <>
      <Sliver x={0} t={415} b={437} {...c} />
      <Sliver x={15} t={417} b={439} {...c} />
      <Sliver x={30} t={419} b={441} {...c} />
    </>
  );
}

function ScrumDay() {
  return <EventBox e={{ x: 1, w: 35, t: 461, b: 483, k: "scrum", lines: ["Dail"], flat: true }} />;
}

// ---------- calendar grid ----------

const DAYS = ["MON", "TUE", "WED", "THU", "FRI"];
const DATES = [27, 28, 29, 30, 31];

const GROUPS = [
  {
    id: "calendar",
    name: "Calendar",
    box: "w-[238px]",
    cols: ["w-[47px]", "w-[47px]", "w-[48px]", "w-[48px]", "w-[48px]"],
    tab: "w-[112px] bg-[#daf0fe]",
    label: "w-[57px]",
    head: "bg-[#daf0fe]",
    today: "bg-[#a5cff4]",
  },
  {
    id: "prod",
    name: "Productivity",
    box: "ml-[20px] w-[235px]",
    cols: ["w-[47px]", "w-[47px]", "w-[47px]", "w-[47px]", "w-[47px]"],
    tab: "w-[145px] bg-[#efefef]",
    label: "w-[74px]",
    head: "bg-[#efefef]",
    today: "bg-[#bdbdbd]",
  },
  {
    id: "red",
    name: "Productivity - Red",
    box: "ml-[21px] w-[233px]",
    cols: ["w-[47px]", "w-[47px]", "w-[46px]", "w-[47px]", "w-[46px]"],
    tab: "w-[177px] bg-[#fbdde1]",
    label: "w-[104px]",
    head: "bg-[#fbdde1]",
    today: "bg-[#f98ea0]",
  },
  {
    id: "amber",
    name: "Productivity - Amber",
    box: "ml-[22px] w-[233px]",
    cols: ["w-[47px]", "w-[46px]", "w-[48px]", "w-[46px]", "w-[46px]"],
    tab: "w-[178px] bg-[#fee3d1]",
    label: "w-[118px]",
    head: "bg-[#fee3d1]",
    today: "bg-[#feae74]",
  },
  {
    id: "green",
    name: "Productivity - Green",
    box: "ml-[22px] w-[234px]",
    cols: ["w-[47px]", "w-[47px]", "w-[47px]", "w-[47px]", "w-[46px]"],
    tab: "w-[186px] bg-[#ddf0df]",
    label: "w-[115px]",
    head: "bg-[#ddf0df]",
    today: "bg-[#86ce8c]",
  },
  {
    id: "scrum",
    name: "Scrum",
    box: "ml-[20px] w-[235px]",
    cols: ["w-[48px]", "w-[47px]", "w-[47px]", "w-[47px]", "w-[46px]"],
    tab: "w-[114px] bg-[#ecdfd5]",
    label: "w-[44px]",
    head: "bg-[#ecdfd5]",
    today: "bg-[#c9a085]",
  },
];

const HOURS = ["8", "9", "10", "11", "12", "1", "2", "3", "4", "5", "6", "7"];

function HourRows({ dotted = true }: { dotted?: boolean }) {
  return (
    <>
      {HOURS.map((h, i) => (
        <div key={h} className={"relative h-[46px] border-t border-[#e1e1e1] " + (dotted && i >= 9 ? "bg-[#efefef]" : "")}>
          {dotted && <div className="absolute left-[1px] right-[2px] top-[22px] border-t border-dotted border-[#d6d6d6]" />}
        </div>
      ))}
    </>
  );
}

function NowLine() {
  return <div className="absolute left-0 right-0 top-[393px] h-[2px] bg-[#2b8ed9]" />;
}

function DayColumn({ d, last, today, head }: { d: number; last: boolean; today: string; head: string }) {
  return (
    <div className="w-full shrink-0 flex flex-col">
      <div className={"h-[25px] flex items-center justify-center text-[12px] " + (d === 0 ? "font-semibold text-[#444] ml-[1px] " + today : "text-[#555] " + head)}>
        {DAYS[d]}
      </div>
      <div className={"border-l border-[#e1e1e1] " + (last ? "border-r" : "")}>
        <div className={"h-[53px] pl-[7px] pt-[5px] text-[16px] leading-[20px] text-[#555] " + (d === 0 ? "font-bold text-[#222]" : "")}>{DATES[d]}</div>
        <div className="h-[24px] border-t-2 border-[#e1e1e1] bg-[#efefef]" />
      </div>
      <div className={"relative border-l border-[#e1e1e1] " + (last ? "border-r" : "")}>
        <HourRows />
      </div>
    </div>
  );
}

function DayEvents({ groupId, d }: { groupId: string; d: number }) {
  if (groupId === "calendar") return <>{CALENDAR_EVENTS[d].map((e, i) => <EventBox key={i} e={e} />)}</>;
  if (groupId === "prod")
    return (
      <>
        {PROD_EVENTS.map((e, i) => (
          <EventBox key={i} e={e} />
        ))}
        <ProdExtras />
      </>
    );
  if (groupId === "red") return <RedDay />;
  if (groupId === "amber") return <AmberDay />;
  if (groupId === "green") return <GreenDay />;
  return <ScrumDay />;
}

function Group({ g }: { g: (typeof GROUPS)[number] }) {
  return (
    <div className={"shrink-0 flex flex-col " + g.box}>
      <div className={"h-[22px] flex items-center pl-[12px] text-[11px] text-[#222] [clip-path:polygon(0_0,calc(100%_-_9px)_0,100%_100%,0_100%)] " + g.tab}>
        {g.id !== "calendar" && <BackArrow />}
        <span className={"whitespace-nowrap " + g.label + (g.id === "scrum" ? " font-semibold" : "")}>{g.name}</span>
        <X size={13} strokeWidth={1.200} className="shrink-0 text-[#444]" />
      </div>
      <div className="flex">
        {g.cols.map((w, d) => (
          <div key={d} className={"relative shrink-0 " + w}>
            <DayColumn d={d} last={d === 4} today={g.today} head={g.head} />
            <div className="absolute left-0 right-0 top-[102px] h-[552px]">
              {g.id === "scrum" && d === 0 && <div className="absolute left-[1px] top-[392px] w-[46px] h-[22px] bg-[#0072c6]" />}
              <NowLine />
              <DayEvents groupId={g.id} d={d} />
            </div>
          </div>
        ))}
      </div>
    </div>
  );
}

function Ruler() {
  return (
    <div className="relative ml-[9px] w-[44px] shrink-0 pt-[100px]">
      <div className="h-[24px] border-t-2 border-[#e1e1e1]" />
      <div className="relative">
        <HourRows dotted={false} />
        {HOURS.map((h, i) => (
          <div
            key={h}
            className={
              "absolute left-0 w-[22px] text-right text-[16px] leading-[20px] " + (h === "4" ? "font-bold text-[#3a96dd]" : "text-[#666]")
            }
            style={{ top: i * 46 + 3 }}
          >
            {h}
          </div>
        ))}
        <span className="absolute left-[24px] top-[3px] text-[8px] text-[#888]">AM</span>
        <span className="absolute left-[24px] top-[187px] text-[8px] text-[#888]">PM</span>
        <NowLine />
      </div>
    </div>
  );
}

function ScrollBar() {
  return (
    <div className="ml-[1px] w-[15px] shrink-0 mt-[102px] mb-0 flex flex-col bg-[#f0f0f0]">
      <div className="h-[13px] bg-white border border-[#ababab] flex items-center justify-center">
        <svg width="7" height="4" viewBox="0 0 7 4" className="fill-[#555]">
          <polygon points="3.500,0 7,4 0,4" />
        </svg>
      </div>
      <div className="mt-[173px] h-[372px] bg-white border border-[#ababab]" />
      <div className="mt-auto mb-[2px] h-[13px] bg-white border border-[#ababab] flex items-center justify-center">
        <svg width="7" height="4" viewBox="0 0 7 4" className="fill-[#555]">
          <polygon points="0,0 7,0 3.500,4" />
        </svg>
      </div>
    </div>
  );
}

function WeatherDay({ kind, w, day, temp }: { kind: "sun" | "rain" | "bright"; w: string; day: string; temp: string }) {
  return (
    <div className={"flex items-center shrink-0 " + w}>
      <div className="w-[31px] flex justify-start">
        <Weather kind={kind} />
      </div>
      <div className="text-[11.500px] leading-[15px] text-[#444] whitespace-nowrap">
        <div>{day}</div>
        <div className="font-semibold">{temp}</div>
      </div>
    </div>
  );
}

function CalendarHeader() {
  return (
    <div className="h-[84px] shrink-0">
      <div className="h-[64px] flex items-center">
        <div className="w-[78px] pl-[25px] flex items-center gap-[20px]">
          <Caret dir="l" className="fill-[#666]" />
          <Caret dir="r" className="fill-[#666]" />
        </div>
        <div className="w-[478px] text-[19.500px] font-light text-[#333] whitespace-nowrap">January 27 - 31, 2020</div>
        <div className="w-[188px] text-[11.500px] font-semibold text-[#444] whitespace-nowrap">
          Eindhoven, Noord-Brabant
          <Tri className="fill-[#444] ml-[8px]" />
        </div>
        <WeatherDay kind="sun" w="w-[105px]" day="Today" temp="9°C / 4°C" />
        <WeatherDay kind="rain" w="w-[110px]" day="Tomorrow" temp="7°C / 3°C" />
        <WeatherDay kind="bright" w="w-[120px]" day="Wednesday" temp="5°C / 3°C" />
        <div className="w-[494px] h-[20px] border border-[#a6acb8] flex items-center justify-between pl-[6px] pr-[11px] text-[11px] text-[#666]">
          <span>Search Scrum</span>
          <Search size={17} strokeWidth={1.100} className="text-[#333] -scale-x-100" />
        </div>
      </div>
      <div className="pl-[34px] h-[20px] leading-[20px] text-[13px] text-[#888]">Results</div>
    </div>
  );
}

function StatusBar() {
  return (
    <div className="h-[22px] shrink-0 bg-[#f3f2f1] border-t border-[#c8c8c8] flex items-center text-[11px] text-[#555]">
      <span className="pl-[8px]">Items: 5</span>
      <span className="ml-auto w-[149px] whitespace-nowrap">All folders are up to date.</span>
      <span className="w-[195px] whitespace-nowrap">Connected to: Microsoft Exchange</span>
      <div className="w-[38px] h-full bg-[#c8c6c4] flex items-center justify-center">
        <svg width="14" height="13" viewBox="0 0 14 13" fill="#f3f2f1" stroke="#666">
          <rect x="0.500" y="0.500" width="13" height="12" />
          <path d="M3.500 0.500v12" />
        </svg>
      </div>
      <div className="w-[36px] flex justify-center">
        <svg width="13" height="13" viewBox="0 0 13 13" fill="none" stroke="#555">
          <path d="M6.500 2L1 0.500v10l5.500 1.500 5.500-1.500v-10zM6.500 2v10M2.500 3l3 .8M2.500 5l3 .8M2.500 7l3 .8M7.500 3.800l3-.8M7.500 5.800l3-.8M7.500 7.800l3-.8" />
        </svg>
      </div>
      <div className="relative ml-[5px] w-[120px] h-[10px] flex items-center">
        <span className="w-[6px] h-[2px] bg-[#555]" />
        <span className="ml-[3px] w-[99px] h-[1px] bg-[#888]" />
        <span className="absolute left-[55px] w-[4px] h-[10px] bg-[#666]" />
        <span className="ml-[3px] w-[7px] h-[7px] bg-[linear-gradient(#555,#555),linear-gradient(#555,#555)] bg-center bg-no-repeat [background-size:7px_1.5px,1.5px_7px]" />
      </div>
      <span className="ml-[6px] pr-[27px]">100%</span>
    </div>
  );
}

export default function App() {
  return (
    <div className="w-[1892px] h-[943px] overflow-hidden flex flex-col bg-white [font-family:'Noto_Sans','Liberation_Sans',sans-serif]">
      <TitleBar />
      <Ribbon />
      <div className="flex flex-1 min-h-0">
        <Sidebar />
        <main className="flex-1 min-w-0 flex flex-col">
          <CalendarHeader />
          <div className="flex flex-1 min-h-0 overflow-hidden">
            <Ruler />
            {GROUPS.map((g) => (
              <Group key={g.id} g={g} />
            ))}
            <ScrollBar />
          </div>
        </main>
      </div>
      <StatusBar />
    </div>
  );
}
